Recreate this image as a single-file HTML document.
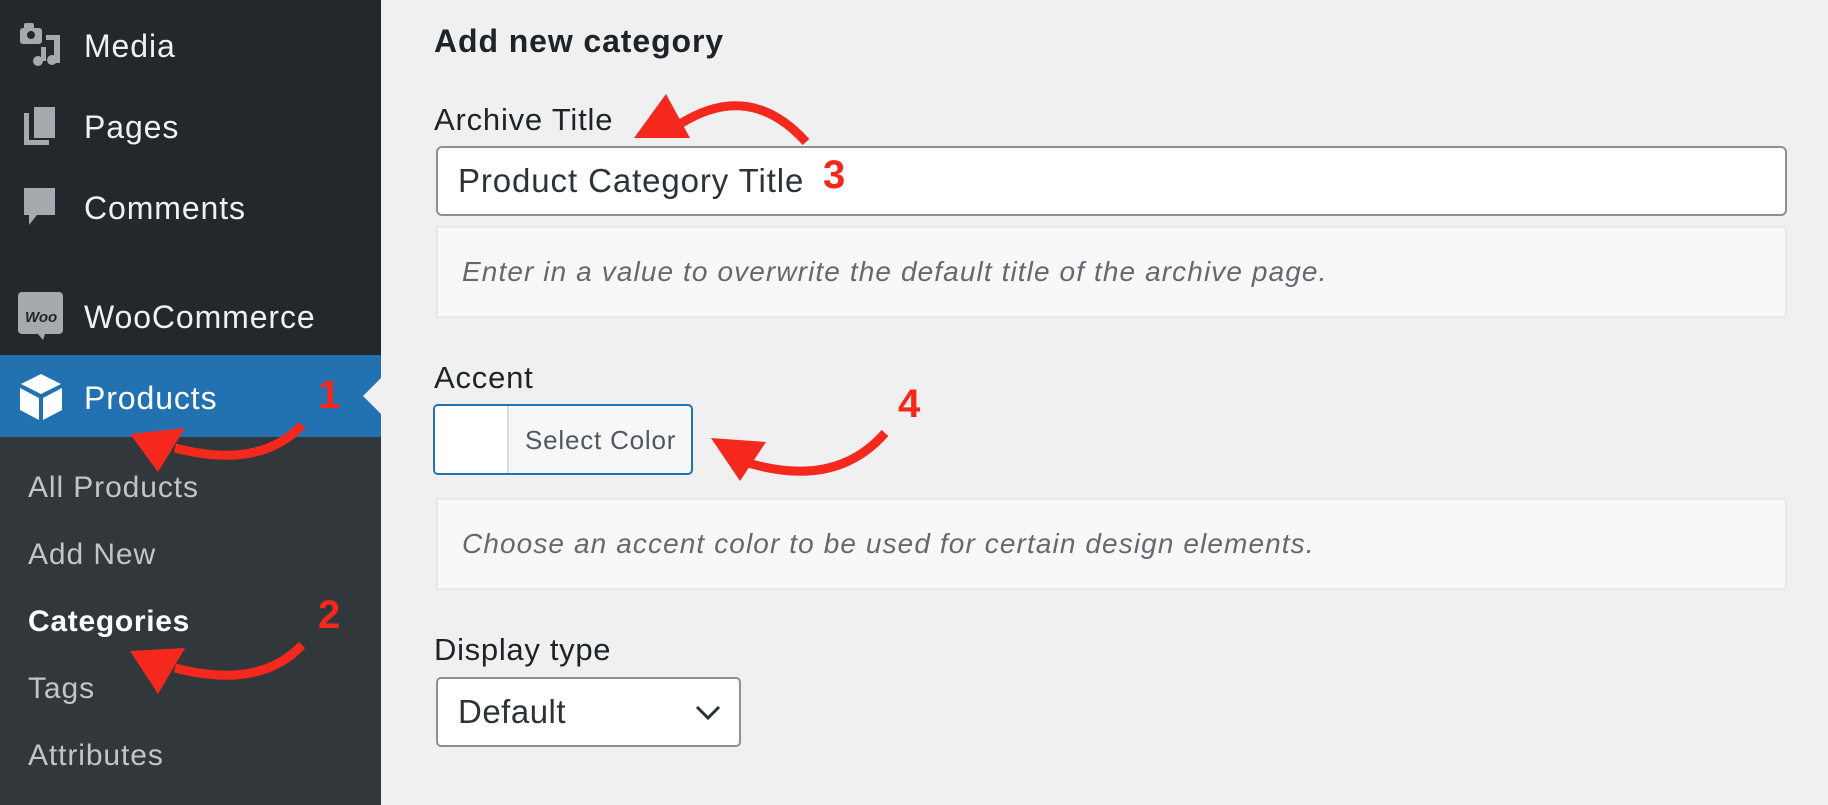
<!DOCTYPE html>
<html><head><meta charset="utf-8"><style>
*{margin:0;padding:0;box-sizing:border-box}
body{width:1828px;height:805px;overflow:hidden;background:#f0f0f1;font-family:"Liberation Sans",sans-serif;position:relative}
.sb{position:absolute;left:0;top:0;width:381px;height:805px;background:#23282d}
.sub{position:absolute;left:0;top:437px;width:381px;height:368px;background:#32373c}
.act{position:absolute;left:0;top:355px;width:381px;height:82px;background:#2271b1}
.mi{position:absolute;left:84px;font-size:32px;letter-spacing:0.9px;color:#f0f0f1}
.si{position:absolute;left:28px;font-size:30px;letter-spacing:0.9px;color:#c3c4c7}
.t{position:absolute;color:#1d2327}
.box{position:absolute;background:#f8f8f8;border:2px solid #e8e8e8}
.help{position:absolute;left:462px;font-size:28px;letter-spacing:1.1px;font-style:italic;color:#646970}
</style></head><body>
<div class="sb"></div><div class="sub"></div><div class="act"></div>
<svg style="position:absolute;left:0;top:0" width="381" height="437">
<g fill="#a7aaad">
<rect x="20" y="28" width="22" height="16" rx="3"/><rect x="24" y="23" width="10" height="6" rx="2"/><circle cx="31" cy="35" r="4" fill="#23282d"/>
<rect x="54" y="35" width="6" height="28"/><rect x="46" y="35" width="12" height="5"/><circle cx="52" cy="60" r="5"/><circle cx="38" cy="61" r="5"/><rect x="41" y="47" width="5" height="14"/>
<rect x="34" y="107" width="21" height="31"/><path d="M24 113h5v27h20v5H24z"/>
<path d="M24 188h31v27h-18l-8 10v-10h-5z"/>
<rect x="18" y="292" width="45" height="42" rx="4"/><path d="M38 334l5 6 2-6z"/>
</g>
<text x="25" y="322" font-family="Liberation Sans" font-size="15" font-weight="bold" font-style="italic" fill="#23282d">Woo</text>
<g fill="#fff"><path d="M41 374l20 10-20 10-20-10z"/><path d="M20 388l19 10v22l-19-10z"/><path d="M43 398l19-10v22l-19 10z"/></g>
<path d="M381 378l-18 18 18 18z" fill="#f0f0f1"/>
</svg>
<div class="mi" style="top:28px">Media</div>
<div class="mi" style="top:109px">Pages</div>
<div class="mi" style="top:190px">Comments</div>
<div class="mi" style="top:299px">WooCommerce</div>
<div class="mi" style="top:380px;color:#fff">Products</div>
<div class="si" style="top:471px">All Products</div>
<div class="si" style="top:538px">Add New</div>
<div class="si" style="top:605px;color:#fff;font-weight:bold;letter-spacing:0.7px">Categories</div>
<div class="si" style="top:672px">Tags</div>
<div class="si" style="top:739px">Attributes</div>

<div class="t" style="left:434px;top:23px;font-size:32px;letter-spacing:0.9px;font-weight:bold">Add new category</div>
<div class="t" style="left:434px;top:102px;font-size:31px;letter-spacing:0.8px">Archive Title</div>
<div style="position:absolute;left:436px;top:146px;width:1351px;height:70px;background:#fff;border:2px solid #8c8f94;border-radius:6px"></div>
<div class="t" style="left:458px;top:162px;font-size:33px;letter-spacing:0.9px;color:#2c3338">Product Category Title</div>
<div class="box" style="left:436px;top:226px;width:1351px;height:92px"></div>
<div class="help" style="top:256px">Enter in a value to overwrite the default title of the archive page.</div>
<div class="t" style="left:434px;top:360px;font-size:31px;letter-spacing:0.8px">Accent</div>
<div style="position:absolute;left:433px;top:404px;width:260px;height:71px;background:#f6f7f7;border:2px solid #2271b1;border-radius:5px;overflow:hidden">
<div style="position:absolute;left:0;top:0;width:74px;height:71px;background:#fff;border-right:2px solid #dcdcde"></div>
<div style="position:absolute;left:90px;top:19px;font-size:26px;letter-spacing:0.8px;color:#50575e">Select Color</div></div>
<div class="box" style="left:436px;top:498px;width:1351px;height:92px"></div>
<div class="help" style="top:528px">Choose an accent color to be used for certain design elements.</div>
<div class="t" style="left:434px;top:632px;font-size:31px;letter-spacing:0.7px">Display type</div>
<div style="position:absolute;left:436px;top:677px;width:305px;height:70px;background:#fff;border:2px solid #8c8f94;border-radius:5px"></div>
<div class="t" style="left:458px;top:693px;font-size:33px;letter-spacing:0.5px;color:#2c3338">Default</div>
<svg style="position:absolute;left:694px;top:703px" width="28" height="20"><path d="M3 4l11 11 11-11" stroke="#2c3338" stroke-width="3" fill="none"/></svg>

<svg style="position:absolute;left:0;top:0" width="1828" height="805">
<g stroke="#f5281e" stroke-width="9" fill="none">
<path d="M302 425 Q260 470 175 448"/>
<path d="M302 645 Q260 690 175 668"/>
<path d="M806 142 Q750 80 680 124"/>
<path d="M885 433 Q835 490 745 462"/>
</g>
<g fill="#f5281e">
<path d="M130 434 L185 428 L158 472z"/>
<path d="M130 651 L185 648 L158 694z"/>
<path d="M634 138 L666 94 L690 138z"/>
<path d="M711 438 L766 442 L740 481z"/>
<g font-family="Liberation Sans" font-weight="bold" font-size="40">
<text x="318" y="408">1</text><text x="318" y="628">2</text><text x="823" y="188">3</text><text x="898" y="417">4</text></g>
</g>
</svg>
</body></html>
